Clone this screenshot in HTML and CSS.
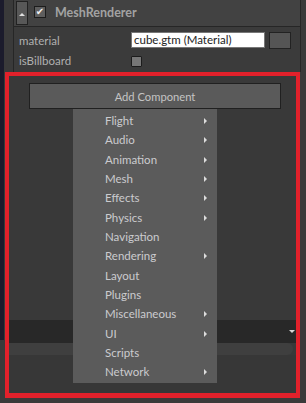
FILE: index.html
```html
<!DOCTYPE html>
<html lang="en">
<head>
  <meta charset="UTF-8" />
  <title>Inspector - Add Component</title>
  <link rel="stylesheet" href="styles.css">
</head>
<body>
  <div class="window">
    <div class="side-strip"></div>
    <div class="content">

      <!-- Component panel -->
      <div class="component">
        <div class="comp-header">
          <div class="collapse-btn"><span class="tri-up"></span></div>
          <div class="check checked">&#10004;</div>
          <span class="comp-title">MeshRenderer</span>
        </div>
        <div class="comp-body">
          <div class="prop-row">
            <span class="prop-label">material</span>
            <div class="prop-input">cube.gtm (Material)</div>
            <div class="pick-btn"></div>
          </div>
          <div class="prop-row">
            <span class="prop-label">isBillboard</span>
            <div class="check"></div>
          </div>
        </div>
      </div>

      <!-- Highlighted area -->
      <div class="highlight">
        <div class="add-wrap">
          <div class="add-btn">Add Component</div>
          <ul class="menu">
            <li>Flight<span class="arrow"></span></li>
            <li>Audio<span class="arrow"></span></li>
            <li>Animation<span class="arrow"></span></li>
            <li>Mesh<span class="arrow"></span></li>
            <li>Effects<span class="arrow"></span></li>
            <li>Physics<span class="arrow"></span></li>
            <li>Navigation</li>
            <li>Rendering<span class="arrow"></span></li>
            <li>Layout</li>
            <li>Plugins</li>
            <li>Miscellaneous<span class="arrow"></span></li>
            <li>UI<span class="arrow"></span></li>
            <li>Scripts</li>
            <li>Network<span class="arrow"></span></li>
          </ul>
        </div>
        <div class="spacer"></div>
        <div class="dark-band"><span class="tri-down"></span></div>
        <div class="scroll-band"></div>
        <div class="bottom-fill"></div>
      </div>

    </div>
  </div>
</body>
</html>
```

FILE: styles.css
```css
body {
  margin: 0;
  background-color: #3a3a3a;
  font-family: Lato, "Noto Sans", sans-serif;
  color: #c8c8c8;
  width: 306px;
  height: 403px;
  overflow: hidden;
}

.window {
  display: flex;
  height: 403px;
}

.side-strip {
  width: 4px;
  height: 340px;
  background: #1b1b2c;
  flex-shrink: 0;
}

.content {
  flex: 1;
  display: flex;
  flex-direction: column;
}

/* Component panel */
.component {
  margin: 0 5px 0 9px;
  border-left: 1px solid #262626;
  border-right: 1px solid #262626;
  height: 72px;
  background: #3b3b3b;
}

.comp-header {
  height: 26px;
  background: #424242;
  border: 1px solid #262626;
  border-top: none;
  margin: 0 -1px;
  display: flex;
  align-items: center;
  padding-left: 2px;
}

.collapse-btn {
  width: 12px;
  height: 24px;
  background: #585858;
  border: 1px solid #222;
  display: flex;
  justify-content: center;
  padding-top: 11px;
  box-sizing: border-box;
  margin-top: -1px;
}

.tri-up {
  width: 0;
  height: 0;
  border-left: 3px solid transparent;
  border-right: 3px solid transparent;
  border-bottom: 3px solid #e0e0e0;
}

.check {
  width: 10px;
  height: 10px;
  background: #5e5e5e;
  border: 1px solid #1c1c1c;
  color: #f2f2f2;
  font-size: 10px;
  line-height: 10px;
  text-align: center;
  font-family: "DejaVu Sans", sans-serif;
}

.comp-header .check {
  margin-left: 6px;
  margin-bottom: 2px;
}

.comp-title {
  margin-left: 9px;
  font-weight: bold;
  font-size: 12.5px;
  color: #a2a2a2;
  margin-bottom: 1px;
}

.comp-body {
  padding: 4px 0 0 5px;
}

.prop-row {
  display: flex;
  align-items: center;
  height: 18px;
  margin-bottom: 2px;
}

.prop-label {
  width: 112px;
  font-size: 11.5px;
  color: #b0b0b0;
}

.prop-input {
  width: 130px;
  height: 14px;
  background: #ffffff;
  border: 1px solid #777;
  color: #222;
  font-size: 11.5px;
  line-height: 14px;
  padding-left: 2px;
  box-sizing: content-box;
}

.pick-btn {
  width: 20px;
  height: 15px;
  margin-left: 4px;
  background: #555;
  border: 1px solid #222;
}

.prop-row .check {
  width: 9px;
  height: 9px;
  border-radius: 1px;
  background: #777;
  margin-top: 2px;
}

/* Red highlight box */
.highlight {
  margin: 0 6px 5px 1px;
  border: 4px solid #e2212b;
  border-bottom-width: 5px;
  flex: 1;
  display: flex;
  flex-direction: column;
  background: #393939;
}

.add-wrap {
  position: relative;
  margin: 7px 15px 0 20px;
}

.add-btn {
  height: 24px;
  background: #5a5a5a;
  border: 1px solid #202020;
  text-align: center;
  line-height: 25px;
  font-size: 11.2px;
  color: #c4c4c4;
}

.menu {
  position: absolute;
  top: 26px;
  left: 44px;
  width: 144px;
  margin: 0;
  padding: 2px 0 1px;
  list-style: none;
  background: #5b5b5b;
  z-index: 2;
}

.menu li {
  height: 19.35px;
  line-height: 19.35px;
  padding-left: 32px;
  font-size: 11.5px;
  color: #cbcbcf;
  position: relative;
}

.arrow {
  position: absolute;
  right: 10px;
  top: 7px;
  width: 0;
  height: 0;
  border-top: 3px solid transparent;
  border-bottom: 3px solid transparent;
  border-left: 3px solid #dcdcdc;
}

.spacer {
  flex: 1;
}

.dark-band {
  height: 23px;
  background: #282828;
  display: flex;
  justify-content: flex-end;
  align-items: center;
  padding-right: 1px;
}

.tri-down {
  width: 0;
  height: 0;
  border-left: 3px solid transparent;
  border-right: 3px solid transparent;
  border-top: 3px solid #d8d8d8;
}

.scroll-band {
  height: 12px;
  margin-right: 3px;
  background: #3f3f3f;
  border-radius: 0 6px 6px 0;
}

.bottom-fill {
  height: 38px;
  background: #373737;
}
```
